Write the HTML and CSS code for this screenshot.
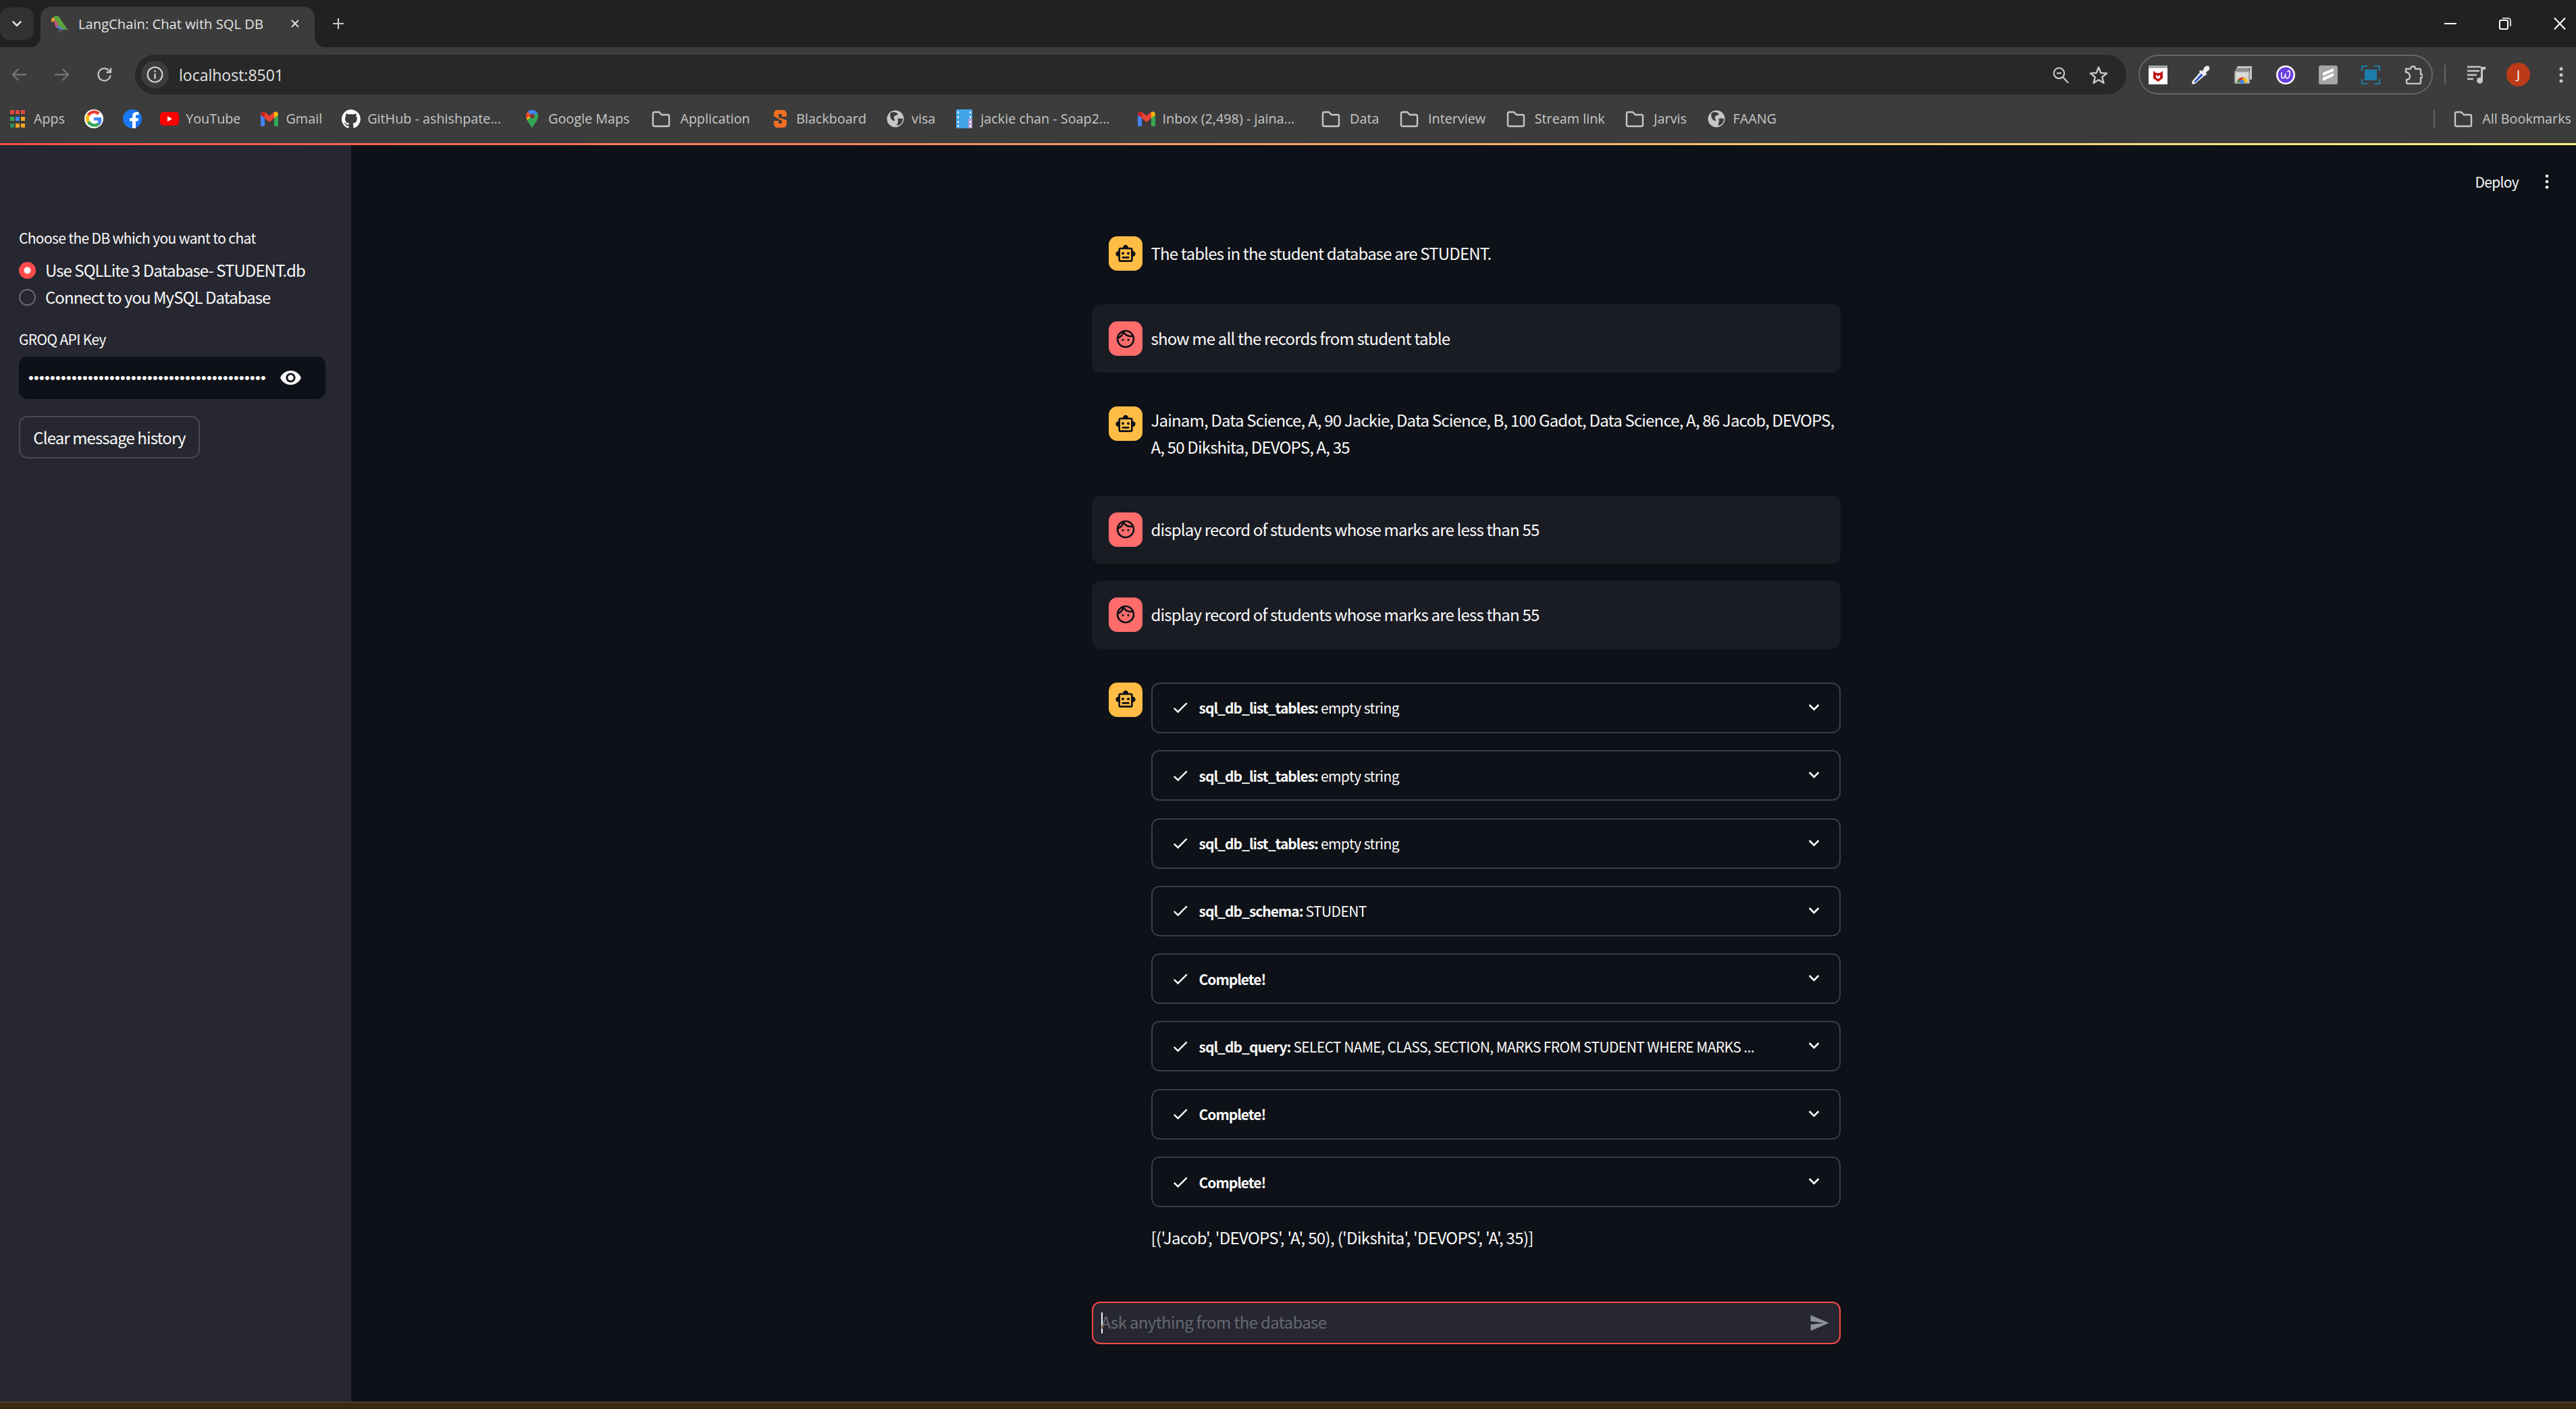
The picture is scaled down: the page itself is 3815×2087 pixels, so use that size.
FILE: index.html
```html
<!DOCTYPE html>
<html lang="en">
<head>
<meta charset="utf-8">
<title>LangChain: Chat with SQL DB</title>
<link rel="stylesheet" href="styles.css">
</head>
<body>
<svg class="defs" width="0" height="0" aria-hidden="true">
  <symbol id="bot" viewBox="0 0 24 24"><path d="M20 9V7c0-1.1-.9-2-2-2h-3c0-1.66-1.34-3-3-3S9 3.34 9 5H6c-1.1 0-2 .9-2 2v2c-1.66 0-3 1.34-3 3s1.34 3 3 3v4c0 1.1.9 2 2 2h12c1.1 0 2-.9 2-2v-4c1.66 0 3-1.34 3-3s-1.34-3-3-3zm-2 10H6V7h12v12zm-9-6c-.83 0-1.5-.67-1.5-1.5S8.17 10 9 10s1.5.67 1.5 1.5S9.83 13 9 13zm7.5-1.5c0 .83-.67 1.5-1.5 1.5s-1.5-.67-1.5-1.5.67-1.5 1.5-1.5 1.5.67 1.5 1.5zM8 15h8v2H8v-2z"/></symbol>
  <symbol id="face" viewBox="0 0 24 24"><path d="M10.25 13c0 .69-.56 1.25-1.25 1.25S7.75 13.69 7.75 13s.56-1.25 1.25-1.25 1.25.56 1.25 1.25zM15 11.75c-.69 0-1.25.56-1.25 1.25s.56 1.25 1.25 1.25 1.25-.56 1.25-1.25-.56-1.25-1.25-1.25zm7 .25c0 5.52-4.48 10-10 10S2 17.52 2 12 6.48 2 12 2s10 4.48 10 10zM10.66 4.12C12.06 6.44 14.6 8 17.5 8c.46 0 .91-.05 1.34-.12C17.44 5.56 14.9 4 12 4c-.46 0-.91.05-1.34.12zM4.42 9.47c1.71-.97 3.03-2.55 3.66-4.44C6.37 6 5.05 7.58 4.42 9.47zM20 12c0-.78-.12-1.53-.33-2.24-.7.15-1.42.24-2.17.24-3.13 0-5.92-1.44-7.76-3.69C8.69 8.87 6.6 10.88 4 11.86c.01.04 0 .09 0 .14 0 4.41 3.59 8 8 8s8-3.59 8-8z"/></symbol>
  <symbol id="check" viewBox="0 0 24 24"><path d="M9 16.17 4.83 12l-1.42 1.41L9 19 21 7l-1.41-1.41z"/></symbol>
  <symbol id="chev" viewBox="0 0 24 24"><path d="M16.59 8.59 12 13.17 7.41 8.59 6 10l6 6 6-6z"/></symbol>
  <symbol id="folder" viewBox="0 0 28 28"><path d="M2 6a2 2 0 0 1 2-2h7l4 4h9a2 2 0 0 1 2 2v13a2 2 0 0 1-2 2H4a2 2 0 0 1-2-2z" fill="none" stroke="#c7c7c7" stroke-width="2.400"/></symbol>
  <symbol id="globe" viewBox="0 0 28 28"><circle cx="14" cy="14" r="12.500" fill="#c7c7c7"/><path d="M7 5c4-2 9-1 11 2-2 2-5 2-6 4-1 3 2 4 1 6-3 1-9-5-6-12zM17 14c3-1 6-1 8 0 0 5-3 9-8 10-2-1 3-6 0-10z" fill="#3c3c3c"/></symbol>
  <symbol id="gmail" viewBox="0 0 28 28"><path d="M1 25V7l6 5v13z" fill="#4285f4"/><path d="M27 25V7l-6 5v13z" fill="#34a853"/><path d="M1 8c0-4 4-6 7-3.500l6 5 6-5c3-2.500 7-.5 7 3.500l-6 5-7 6-7-6z" fill="#ea4335"/><path d="M21 4c3-1.500 6 0 6 4l-6 5z" fill="#fbbc04"/><path d="M1 8c0-4 3-5 6-4v9z" fill="#c5221f"/></symbol>
</svg>

<header class="browser">
  <div class="tabstrip">
    <button class="tab-menu"><svg class="ico14" viewBox="0 0 14 14"><path d="M1.500 4 7 9.500 12.500 4" fill="none" stroke="#e3e3e3" stroke-width="2.200"/></svg></button>
    <div class="tab">
      <svg class="favicon" viewBox="0 0 27 27">
        <path d="M22 22 C17 23 10 21 7 17 5 13 5 9 6 6 l5 2z" fill="#c9507a"/>
        <path d="M21 22 C17 23 12 22 9 18 L12 13z" fill="#4b7fc2"/>
        <path d="M3 6C4 2 8 0 11 2c3 2 4 5 6 8l9 13-6-2c-5-1-9-5-11-11C7 8 5 7 3 6z" fill="#5ba23c"/>
        <path d="M1 8c0-3 2-4 4-4l1 4-3 3C2 11 1 10 1 8z" fill="#f0a030"/>
        <path d="M13 22v4M16 23v3" stroke="#6f6a70" stroke-width="1.500"/>
      </svg>
      <span class="tab-title">LangChain: Chat with SQL DB</span>
      <svg class="tab-x" viewBox="0 0 14 14"><path d="M2 2l10 10M12 2 2 12" stroke="#e3e3e3" stroke-width="1.800"/></svg>
    </div>
    <svg class="new-tab" viewBox="0 0 18 18"><path d="M9 1v16M1 9h16" stroke="#c7c7c7" stroke-width="2.200"/></svg>
    <div class="win-controls">
      <svg class="win-btn" viewBox="0 0 20 20"><path d="M1 10h18" stroke="#fff" stroke-width="2"/></svg>
      <svg class="win-btn" viewBox="0 0 20 20"><rect x="2" y="5" width="12" height="13" rx="2" fill="none" stroke="#fff" stroke-width="2"/><path d="M6 2h8a4 4 0 0 1 4 4v8" fill="none" stroke="#fff" stroke-width="1.600"/></svg>
      <svg class="win-btn" viewBox="0 0 20 20"><path d="M2 1.500l16 17M18 1.500 2 18.500" stroke="#fff" stroke-width="2"/></svg>
    </div>
  </div>
  <div class="toolbar">
    <div class="nav">
      <svg class="nav-ico" viewBox="0 0 24 24"><path d="M23 12H2M11 3l-9 9 9 9" fill="none" stroke="#7d7d7d" stroke-width="2"/></svg>
      <svg class="nav-ico" viewBox="0 0 24 24"><path d="M1 12h21M13 3l9 9-9 9" fill="none" stroke="#7d7d7d" stroke-width="2"/></svg>
      <svg class="nav-ico" viewBox="0 0 24 24"><path d="M21.500 13a9.500 9.500 0 1 1-2.500-7.500L22 8.500M22 1.500v7h-7" fill="none" stroke="#c7c7c7" stroke-width="2.200"/></svg>
    </div>
    <div class="omnibox">
      <span class="site-chip"><svg class="info" viewBox="0 0 24 24"><circle cx="12" cy="12" r="10.500" fill="none" stroke="#d5d5d5" stroke-width="2"/><path d="M12 10.500V18M12 6v2.500" stroke="#d5d5d5" stroke-width="2.200"/></svg></span>
      <span class="url">localhost:8501</span>
      <svg class="omni-ico" viewBox="0 0 28 28"><circle cx="11" cy="11" r="9" fill="none" stroke="#c7c7c7" stroke-width="2.600"/><path d="M7 11h8M18 18l9 10" stroke="#c7c7c7" stroke-width="2.600"/></svg>
      <svg class="omni-ico star" viewBox="0 0 28 28"><path d="M14 2.500l3.200 8.500 9 .6-7 5.700 2.300 8.800-7.500-4.900-7.500 4.900 2.300-8.800-7-5.700 9-.6z" fill="none" stroke="#c7c7c7" stroke-width="2.400" stroke-linejoin="round"/></svg>
    </div>
    <div class="ext-pill">
      <svg class="ext" viewBox="0 0 28 28"><rect width="28" height="28" rx="1" fill="#fff"/><rect width="28" height="4" fill="#a8a8a8"/><path d="M7 8l4 3h6l4-3v11l-7 5-7-5z" fill="#c01818"/><path d="M11 14v4l3 2 3-2v-4l-3 2z" fill="#fff"/></svg>
      <svg class="ext" viewBox="0 0 28 28"><path d="M1 24 14 9l6 6L6 27l-4 1z" fill="#f0f0f0"/><path d="M4 24 15 12l2.500 2.500L6 25.500z" fill="#2f55c9"/><path d="M13 7l4 1 2-4c2-4 5-4 7-3 2 2 2 5-1 7l-3 2 1 4-3 1-8-6z" fill="#f0f0f0"/></svg>
      <svg class="ext" viewBox="0 0 28 28"><rect x="5" y="1" width="22" height="20" rx="1" fill="#c4c4c4"/><rect x="8" y="4" width="16" height="14" fill="#3c3c3c"/><rect x="3" y="4" width="20" height="20" rx="1" fill="#8e8e8e"/><rect x="1" y="8" width="23" height="19" rx="1" fill="#a0a0a0"/><rect x="3" y="10" width="19" height="15" fill="#d9d9d9"/><path d="M5 25a7.500 7.500 0 0 1 15 0z" fill="#d8382c"/><path d="M12.500 19h6.500a7 7 0 0 1 1 6h-5z" fill="#f4c20d"/><path d="M5 25a7.500 7.500 0 0 1 2-5l3 5z" fill="#2e9e4f"/><circle cx="12.500" cy="24" r="3" fill="#4285f4"/></svg>
      <svg class="ext" viewBox="0 0 28 28"><circle cx="14" cy="14" r="14" fill="#fff"/><circle cx="14" cy="14" r="11.500" fill="#6a3fe0"/><path d="M8 10c-1 6 0 9 2 9s3-3 4-7c-1 4 0 7 2 7 3 0 5-5 4-10-1-2-3-1-3 1" fill="none" stroke="#fff" stroke-width="1.500"/></svg>
      <svg class="ext" viewBox="0 0 28 28"><rect width="28" height="28" rx="3" fill="#a5a5a5"/><path d="M6 11l16-7v4.500L6 15.500zM6 18l16-7v4.500L6 23z" fill="#fff"/></svg>
      <svg class="ext" viewBox="0 0 28 28"><path d="M1 8V1h8M19 1h8v7M1 20v7h8M19 27h8v-7" fill="none" stroke="#1d7cab" stroke-width="2"/><rect x="5" y="6" width="18" height="16" fill="#1d7cab"/></svg>
      <svg class="ext" viewBox="0 0 28 28"><path d="M3 5h7c0-5 7-5 7 0h6a2 2 0 0 1 2 2v6c4 0 4 5 0 5v7a2 2 0 0 1-2 2H6a2 2 0 0 1-2-2v-4c3 0 5-1 5-4.500S7 10 3 10z" fill="none" stroke="#c7c7c7" stroke-width="2.400" stroke-linejoin="round"/></svg>
    </div>
    <span class="tool-div"></span>
    <svg class="queue" viewBox="0 0 28 28"><path d="M0 3h20M0 9h18M0 15h14M0 21h9" stroke="#c7c7c7" stroke-width="2.500" fill="none"/><path d="M20 3h7v4h-4v16a4.500 4.500 0 1 1-3-4z" fill="#c7c7c7"/></svg>
    <span class="profile">J</span>
    <svg class="kebab" viewBox="0 0 6 24"><circle cx="3" cy="3" r="2.500"/><circle cx="3" cy="12" r="2.500"/><circle cx="3" cy="21" r="2.500"/></svg>
  </div>
  <nav class="bookmarks">
    <a class="bm"><svg class="bm-ico" viewBox="0 0 28 28"><g fill="#e04a40"><rect x="3" y="1" width="6" height="6"/><rect x="11" y="1" width="6" height="6"/><rect x="19" y="1" width="6" height="6"/></g><rect x="3" y="11" width="6" height="6" fill="#34a853"/><rect x="11" y="11" width="6" height="6" fill="#4285f4"/><rect x="19" y="11" width="6" height="6" fill="#f5a623"/><rect x="3" y="21" width="6" height="6" fill="#2f8f57"/><rect x="11" y="21" width="6" height="6" fill="#f5a623"/><rect x="19" y="21" width="6" height="6" fill="#f5a623"/></svg><span>Apps</span></a>
    <a class="bm"><svg class="bm-ico" viewBox="0 0 28 28"><circle cx="14" cy="14" r="14" fill="#fff"/><path d="M14 6a8 8 0 0 1 5.500 2.200L23 4.700A13 13 0 0 0 4 7l3.600 3.400A8 8 0 0 1 14 6z" fill="#ea4335"/><path d="M7.600 10.400 4 7a12 12 0 0 0 0 13l3.600-3.200a8 8 0 0 1 0-6.400z" fill="#fbbc04"/><path d="M7.600 16.800 4 20a13 13 0 0 0 19 3l-3.700-3A8 8 0 0 1 7.600 16.800z" fill="#34a853"/><path d="M25 12H14v4.500h6.500a6 6 0 0 1-1.200 3.500l3.700 3c2.600-3 2.700-7 2-11z" fill="#4285f4"/></svg></a>
    <a class="bm bm-f"><svg class="bm-ico" viewBox="0 0 28 28"><circle cx="14" cy="14" r="14" fill="#1877f2"/><path d="M19 28V17.500h3.500l.6-4.500H19v-2.500c0-1.300.6-2.500 2.600-2.500h2V4.500S21.700 4 20 4c-3.600 0-6 2.200-6 6V13h-4v4.500h4V28z" fill="#fff"/></svg></a>
    <a class="bm"><svg class="bm-ico" viewBox="0 0 28 28"><rect y="4" width="28" height="20" rx="5" fill="#f00"/><path d="M11 10l7 4-7 4z" fill="#fff"/></svg><span>YouTube</span></a>
    <a class="bm"><svg class="bm-ico"><use href="#gmail"/></svg><span>Gmail</span></a>
    <a class="bm bm-long"><svg class="bm-ico" viewBox="0 0 24 24"><path fill="#fff" d="M12 .3a12 12 0 0 0-3.800 23.400c.6.100.8-.3.800-.6v-2c-3.300.7-4-1.600-4-1.600-.6-1.400-1.400-1.800-1.400-1.800-1-.7.100-.7.100-.7 1.200.1 1.800 1.200 1.800 1.200 1 1.800 2.800 1.300 3.500 1 .1-.8.400-1.300.8-1.600-2.700-.3-5.500-1.300-5.500-5.900 0-1.300.5-2.400 1.200-3.200-.1-.3-.5-1.500.1-3.200 0 0 1-.3 3.300 1.200a11.500 11.500 0 0 1 6 0c2.300-1.500 3.300-1.200 3.300-1.200.6 1.700.2 2.900.1 3.200.8.800 1.200 1.900 1.200 3.200 0 4.600-2.800 5.600-5.500 5.900.4.400.8 1.100.8 2.200v3.300c0 .3.200.7.800.6A12 12 0 0 0 12 .3z"/></svg><span>GitHub - ashishpate...</span></a>
    <a class="bm bm-maps"><svg class="bm-ico" viewBox="0 0 28 28"><path d="M14 28c-2-6-9-11-9-18a9 9 0 0 1 18 0c0 7-7 12-9 18z" fill="#34a853"/><path d="M7.500 3.500A9 9 0 0 0 5 10c0 2 1 4 2 6l7-7z" fill="#fbbc04"/><path d="M22 5 7 16l4 6 12-12c0-2 0-4-1-5z" fill="#34a853"/><path d="M14 1a9 9 0 0 1 8 5l-8 4-6.500-6.500A9 9 0 0 1 14 1z" fill="#4285f4"/><path d="M7.500 3.500 12 8l-6 6c-1-1-1-3-1-4a9 9 0 0 1 2.500-6.500z" fill="#ea4335"/><circle cx="14" cy="10" r="3.500" fill="#7a3a30"/></svg><span>Google Maps</span></a>
    <a class="bm bm-folder"><svg class="bm-ico"><use href="#folder"/></svg><span>Application</span></a>
    <a class="bm"><svg class="bm-ico" viewBox="0 0 28 28"><path d="M5 5l3-4h13l3 4v6h-7V7h-5v5l12 4v7l-3 4H8l-3-4v-6h7v4h5v-4L5 10z" fill="#f36f21"/></svg><span>Blackboard</span></a>
    <a class="bm"><svg class="bm-ico"><use href="#globe"/></svg><span>visa</span></a>
    <a class="bm bm-elided"><svg class="bm-ico" viewBox="0 0 28 28"><rect x="2" width="24" height="28" fill="#42a5e8"/><rect x="20" y="14" width="6" height="14" fill="#b39ddb"/><g fill="#fff"><rect x="4" y="3" width="2" height="3"/><rect x="4" y="10" width="2" height="3"/><rect x="4" y="17" width="2" height="3"/><rect x="4" y="23" width="2" height="3"/><rect x="22" y="3" width="2" height="3"/><rect x="22" y="10" width="2" height="3"/><rect x="22" y="17" width="2" height="3"/><rect x="22" y="23" width="2" height="3"/></g></svg><span>jackie chan - Soap2...</span></a>
    <a class="bm bm-elided"><svg class="bm-ico"><use href="#gmail"/></svg><span>Inbox (2,498) - jaina...</span></a>
    <a class="bm bm-folder"><svg class="bm-ico"><use href="#folder"/></svg><span>Data</span></a>
    <a class="bm bm-folder"><svg class="bm-ico"><use href="#folder"/></svg><span>Interview</span></a>
    <a class="bm bm-folder"><svg class="bm-ico"><use href="#folder"/></svg><span>Stream link</span></a>
    <a class="bm bm-folder"><svg class="bm-ico"><use href="#folder"/></svg><span>Jarvis</span></a>
    <a class="bm"><svg class="bm-ico"><use href="#globe"/></svg><span>FAANG</span></a>
    <span class="bm-spacer"></span>
    <span class="bm-div"></span>
    <a class="bm bm-folder bm-all"><svg class="bm-ico"><use href="#folder"/></svg><span>All Bookmarks</span></a>
  </nav>
</header>
<div class="decoration"></div>

<div class="app">
  <aside class="sidebar">
    <div class="field-label">Choose the DB which you want to chat</div>
    <div class="radios">
      <div class="radio-row"><span class="radio on"></span><span>Use SQLLite 3 Database- STUDENT.db</span></div>
      <div class="radio-row"><span class="radio"></span><span>Connect to you MySQL Database</span></div>
    </div>
    <div class="field-label groq">GROQ API Key</div>
    <div class="key-input">
      <span class="key-dots">••••••••••••••••••••••••••••••••••••••••••••</span>
      <svg class="eye" viewBox="1 5 22 15"><path fill="#fafafa" d="M12 5C7 5 2.730 8.110 1 12.500 2.730 16.890 7 20 12 20s9.270-3.110 11-7.500C21.270 8.110 17 5 12 5zm0 12.500c-2.760 0-5-2.240-5-5s2.240-5 5-5 5 2.240 5 5-2.240 5-5 5zm0-8c-1.660 0-3 1.340-3 3s1.340 3 3 3 3-1.340 3-3-1.340-3-3-3z"/></svg>
    </div>
    <button class="clear-btn">Clear message history</button>
  </aside>

  <main class="main">
    <div class="top-actions"><span class="deploy">Deploy</span><svg class="kebab main-kebab" viewBox="0 0 6 24"><circle cx="3" cy="3" r="2.500"/><circle cx="3" cy="12" r="2.500"/><circle cx="3" cy="21" r="2.500"/></svg></div>
    <div class="chat">
      <section class="msg">
        <span class="avatar bot"><svg class="av-ico"><use href="#bot"/></svg></span>
        <div class="msg-body"><p>The tables in the student database are STUDENT.</p></div>
      </section>
      <section class="msg user">
        <span class="avatar human"><svg class="av-ico"><use href="#face"/></svg></span>
        <div class="msg-body"><p>show me all the records from student table</p></div>
      </section>
      <section class="msg">
        <span class="avatar bot"><svg class="av-ico"><use href="#bot"/></svg></span>
        <div class="msg-body"><p>Jainam, Data Science, A, 90 Jackie, Data Science, B, 100 Gadot, Data Science, A, 86 Jacob, DEVOPS, A, 50 Dikshita, DEVOPS, A, 35</p></div>
      </section>
      <section class="msg user">
        <span class="avatar human"><svg class="av-ico"><use href="#face"/></svg></span>
        <div class="msg-body"><p>display record of students whose marks are less than 55</p></div>
      </section>
      <section class="msg user">
        <span class="avatar human"><svg class="av-ico"><use href="#face"/></svg></span>
        <div class="msg-body"><p>display record of students whose marks are less than 55</p></div>
      </section>
      <section class="msg last">
        <span class="avatar bot"><svg class="av-ico"><use href="#bot"/></svg></span>
        <div class="steps">
          <div class="exp"><svg class="exp-check"><use href="#check"/></svg><span class="exp-label"><b>sql_db_list_tables:</b> empty string</span><svg class="exp-chev"><use href="#chev"/></svg></div>
          <div class="exp"><svg class="exp-check"><use href="#check"/></svg><span class="exp-label"><b>sql_db_list_tables:</b> empty string</span><svg class="exp-chev"><use href="#chev"/></svg></div>
          <div class="exp"><svg class="exp-check"><use href="#check"/></svg><span class="exp-label"><b>sql_db_list_tables:</b> empty string</span><svg class="exp-chev"><use href="#chev"/></svg></div>
          <div class="exp"><svg class="exp-check"><use href="#check"/></svg><span class="exp-label"><b>sql_db_schema:</b> STUDENT</span><svg class="exp-chev"><use href="#chev"/></svg></div>
          <div class="exp"><svg class="exp-check"><use href="#check"/></svg><span class="exp-label"><b>Complete!</b></span><svg class="exp-chev"><use href="#chev"/></svg></div>
          <div class="exp"><svg class="exp-check"><use href="#check"/></svg><span class="exp-label"><b>sql_db_query:</b> SELECT NAME, CLASS, SECTION, MARKS FROM STUDENT WHERE MARKS ...</span><svg class="exp-chev"><use href="#chev"/></svg></div>
          <div class="exp"><svg class="exp-check"><use href="#check"/></svg><span class="exp-label"><b>Complete!</b></span><svg class="exp-chev"><use href="#chev"/></svg></div>
          <div class="exp"><svg class="exp-check"><use href="#check"/></svg><span class="exp-label"><b>Complete!</b></span><svg class="exp-chev"><use href="#chev"/></svg></div>
          <p class="result">[('Jacob', 'DEVOPS', 'A', 50), ('Dikshita', 'DEVOPS', 'A', 35)]</p>
        </div>
      </section>
    </div>
    <div class="chat-input">
      <span class="caret"></span>
      <span class="placeholder">Ask anything from the database</span>
      <svg class="send" viewBox="0 0 24 24"><path d="M2.010 21 23 12 2.010 3 2 10l15 2-15 2z"/></svg>
    </div>
  </main>
</div>
<div class="taskbar"></div>
</body>
</html>
```

FILE: styles.css
```css
* { box-sizing: border-box; }
html, body { height: 100%; }
body {
  margin: 0;
  height: 2087px;
  overflow: hidden;
  display: flex;
  flex-direction: column;
  background: #0e1117;
  color: #fafafa;
  font-family: "Noto Sans CJK SC", "Noto Sans", sans-serif;
  font-size: 24px;
  letter-spacing: -0.82px;
  line-height: 40px;
}
.defs { position: absolute; }
p { margin: 0; }
button { font: inherit; color: inherit; letter-spacing: inherit; }

/* Browser chrome */
.browser { flex: none; background: #3c3c3c; font-family: "Open Sans", sans-serif; letter-spacing: 0; }
.tabstrip {
  height: 70px;
  background: #202120;
  display: flex;
  align-items: flex-end;
  position: relative;
}
.tab-menu {
  width: 50px;
  height: 48px;
  margin-bottom: 11px;
  padding: 0;
  border: 0;
  border-radius: 14px;
  background: #323232;
  display: flex;
  align-items: center;
  justify-content: center;
}
.ico14 { width: 16px; height: 16px; }
.tab {
  width: 406px;
  height: 60px;
  margin-left: 10px;
  background: #3c3c3c;
  border-radius: 16px 16px 0 0;
  display: flex;
  align-items: center;
  padding: 0 22px 10px 15px;
  position: relative;
}
.tab::before, .tab::after {
  content: "";
  position: absolute;
  bottom: 0;
  width: 16px;
  height: 16px;
}
.tab::before { left: -16px; background: radial-gradient(circle at 0 0, transparent 16px, #3c3c3c 16.500px); }
.tab::after { right: -16px; background: radial-gradient(circle at 100% 0, transparent 16px, #3c3c3c 16.500px); }
.favicon { width: 27px; height: 27px; flex: none; }
.tab-title {
  margin-left: 14px;
  flex: 1;
  font-size: 20.200px;
  line-height: 30px;
  color: #e3e3e3;
  white-space: nowrap;
}
.tab-x { width: 14px; height: 14px; flex: none; }
.new-tab { width: 18px; height: 18px; margin: 0 0 26px 26px; flex: none; }
.win-controls {
  margin-left: auto;
  height: 70px;
  padding-right: 14px;
  display: flex;
  align-items: center;
  gap: 61px;
}
.win-btn { width: 20px; height: 20px; }

.toolbar {
  height: 70px;
  padding: 11px 0 0 0;
  display: flex;
  align-items: flex-start;
}
.nav { width: 200px; height: 59px; padding-left: 17px; display: flex; align-items: center; gap: 40px; }
.nav-ico { width: 23px; height: 23px; flex: none; }
.omnibox {
  width: 2949px;
  height: 59px;
  border-radius: 30px;
  background: #282828;
  display: flex;
  align-items: center;
  padding: 0 27px 0 9px;
}
.site-chip {
  width: 41px;
  height: 41px;
  border-radius: 50%;
  background: #3c3c3c;
  display: flex;
  align-items: center;
  justify-content: center;
  flex: none;
}
.info { width: 25px; height: 25px; }
.url { margin-left: 15px; flex: 1; font-size: 23px; color: #e3e3e3; line-height: 30px; }
.omni-ico { width: 24px; height: 24px; flex: none; }
.star { width: 28px; height: 28px; margin-left: 30px; }
.ext-pill {
  margin-left: 18px;
  width: 436px;
  height: 59px;
  border: 2px solid #666;
  border-radius: 30px;
  padding: 0 13px;
  display: flex;
  align-items: center;
  justify-content: space-between;
  flex: none;
}
.ext { width: 28px; height: 28px; flex: none; }
.tool-div { width: 2px; height: 28px; margin: 15px 0 0 17px; background: #666; flex: none; }
.queue { width: 28px; height: 28px; margin: 15px 0 0 32px; flex: none; }
.profile {
  width: 35px;
  height: 35px;
  margin: 12px 0 0 30px;
  border-radius: 50%;
  background: #bb3a17;
  font-size: 19px;
  line-height: 35px;
  text-align: center;
  color: #fff;
  flex: none;
}
.kebab { width: 6px; height: 24px; fill: #c7c7c7; flex: none; }
.toolbar .kebab { margin: 18px 0 0 43px; }

.bookmarks {
  height: 72px;
  padding: 0 7px 0 12px;
  display: flex;
  align-items: center;
  font-size: 19.800px;
  line-height: 28px;
  color: #c7c7c7;
}
.bm { display: flex; align-items: center; gap: 10px; margin-right: 29px; white-space: nowrap; flex: none; }
.bm-ico { width: 28px; height: 28px; flex: none; }
.bm-f { margin-right: 27px; }
.bm-folder { gap: 14px; margin-right: 30.500px; }
.bm-long { margin-right: 32px; }
.bm-maps { margin-right: 33px; }
.bm-elided { margin-right: 40px; }
.bm-spacer { flex: 1; }
.bm-div { width: 2px; height: 27px; background: #666; margin-right: 28px; flex: none; }
.bm-all { margin-right: 0; }

.decoration {
  flex: none;
  height: 3px;
  background: linear-gradient(90deg, #ff4b4b, #fffd80);
}

/* App */
.app { flex: 1; min-height: 0; display: flex; }
.sidebar {
  width: 520px;
  flex: none;
  background: #262730;
  padding: 120px 38px 0 28px;
  display: flex;
  flex-direction: column;
  align-items: flex-start;
}
.field-label { font-size: 21px; letter-spacing: -0.65px; line-height: 35px; }
.radios { margin-top: 10px; }
.radio-row { height: 40px; display: flex; align-items: center; gap: 14px; font-size: 24px; letter-spacing: -0.95px; white-space: nowrap; }
.radio { width: 25px; height: 25px; border-radius: 50%; border: 2px solid #6a6c75; flex: none; background: #262730; }
.radio.on { border: 0; background: radial-gradient(circle, #f5f5f5 0 4.500px, #ff4b4b 5.500px); }
.groq { margin-top: 25px; }
.key-input {
  margin-top: 8px;
  width: 454px;
  height: 63px;
  background: #0e1117;
  border-radius: 12.500px;
  padding: 0 36px 0 14px;
  display: flex;
  align-items: center;
  justify-content: space-between;
}
.key-dots {
  white-space: nowrap;
  font-family: "Liberation Sans", sans-serif;
  font-size: 22px;
  letter-spacing: 0.300px;
  line-height: 22px;
}
.eye { width: 31px; height: 21px; flex: none; }
.clear-btn {
  margin-top: 25px;
  width: 268px;
  height: 63px;
  background: #262730;
  border: 2px solid #484a55;
  border-radius: 12.500px;
  font-size: 24px;
  letter-spacing: -0.9px;
  line-height: 40px;
  padding: 0;
  white-space: nowrap;
}

.main {
  flex: 1;
  min-width: 0;
  padding: 110px 0 85px 7px;
  display: flex;
  flex-direction: column;
  align-items: center;
  position: relative;
}
.top-actions {
  position: absolute;
  top: 34px;
  right: 40px;
  display: flex;
  align-items: center;
  gap: 39px;
  font-size: 21px;
  letter-spacing: -0.7px;
  line-height: 40px;
}
.main-kebab { fill: #fafafa; height: 22px; }
.chat {
  flex: 1;
  width: 1109px;
  display: flex;
  flex-direction: column;
  gap: 25.200px;
  min-height: 0;
}
.msg {
  display: flex;
  gap: 13px;
  padding: 25px 0 25px 25px;
  border-radius: 12.500px;
}
.msg.user { background: #1a1c24; }
.msg.last { padding-bottom: 0; }
.avatar {
  width: 50px;
  height: 51px;
  border-radius: 12.500px;
  flex: none;
  display: flex;
  align-items: center;
  justify-content: center;
}
.avatar.bot { background: #ffbd45; }
.avatar.human { background: #ff6c6c; }
.av-ico { width: 32px; height: 32px; fill: #0e1117; }
.msg-body { flex: 1; min-width: 0; min-height: 51px; padding-bottom: 1px; display: flex; align-items: center; }
.steps { flex: 1; min-width: 0; display: flex; flex-direction: column; gap: 25.300px; }
.exp {
  height: 75px;
  border: 2px solid #3c3e45;
  border-radius: 12.500px;
  padding: 0 22px 0 27px;
  display: flex;
  align-items: center;
  gap: 14px;
  font-size: 21px;
  letter-spacing: -0.6px;
}
.exp-check { width: 28px; height: 28px; fill: #fafafa; flex: none; }
.exp-chev { width: 31px; height: 31px; fill: #fafafa; flex: none; margin-top: -2px; }
.exp-label { flex: 1; white-space: nowrap; overflow: hidden; }
.exp-label b { font-weight: 700; letter-spacing: -1px; }
.result { letter-spacing: -0.67px; }

.chat-input {
  flex: none;
  width: 1109px;
  height: 63px;
  background: #262730;
  border: 2px solid #ff4b4b;
  border-radius: 12.500px;
  padding: 0 14px 0 12px;
  display: flex;
  align-items: center;
}
.caret { width: 2px; height: 31px; background: #fafafa; flex: none; }
.placeholder { flex: 1; color: #666873; white-space: nowrap; margin-left: -2px; padding-bottom: 3px; letter-spacing: -0.65px; }
.send { width: 31px; height: 31px; fill: #8e919e; flex: none; }
.taskbar { flex: none; height: 11px; background: #3a2815; border-top: 2px solid #4c412f; }
```
